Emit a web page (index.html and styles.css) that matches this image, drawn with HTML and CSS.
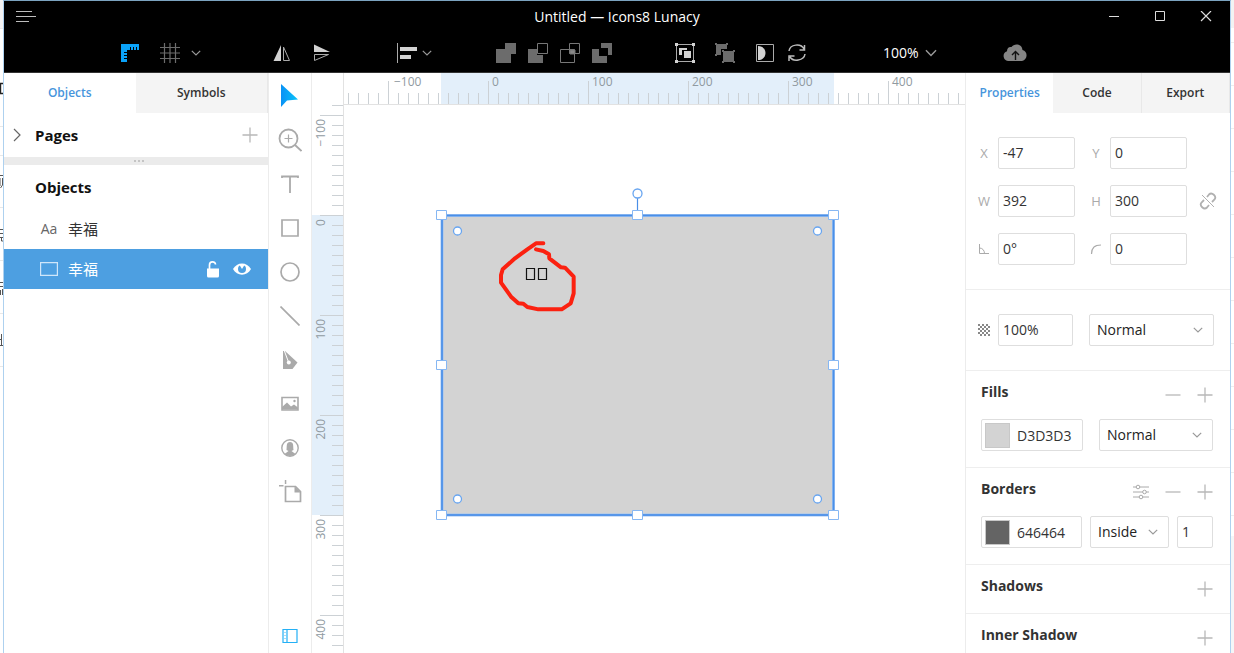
FILE: index.html
```html
<!DOCTYPE html>
<html lang="en">
<head>
<meta charset="utf-8">
<title>Untitled — Icons8 Lunacy</title>
<link rel="stylesheet" href="styles.css">
</head>
<body>
<svg class="defs" aria-hidden="true">
  <symbol id="chevron" viewBox="0 0 10 6"><path d="M.8.8 5 5 9.200.8" fill="none" stroke="currentColor" stroke-width="1.200"/></symbol>
  <symbol id="plus" viewBox="0 0 16 16"><path d="M8 .5v15M.5 8h15" fill="none" stroke="currentColor" stroke-width="1.300"/></symbol>
  <symbol id="minus" viewBox="0 0 16 16"><path d="M.5 8h15" fill="none" stroke="currentColor" stroke-width="1.300"/></symbol>
</svg>
<div class="desktop">
  <div class="behind-left" aria-hidden="true">
    <svg width="3" height="653" fill="none" stroke="#555">
      <path d="M0 28.500h3M0 126.500h3M0 155.500h3M0 207.500h3M0 260.500h3M0 313.500h3M0 366.500h3" stroke="#e8e8e8"/>
      <path d="M3 83.500H.5v10H3" stroke="#222" stroke-width="1.400"/>
      <path d="M0 175.500h3M2.500 178v7l-2 3M0 178v8M0 229.500h3M0 233.500h3M0 237.500h3M1.500 237v4h2M0 282.500h3M0 286.500h3M.5 290v5M2.500 289v6M0 339.500h2M1.500 334v11M0 345.500h3"/>
    </svg>
  </div>
  <div class="app">
    <header class="header">
      <div class="titlebar">
        <button class="icon-btn menu" aria-label="Menu"><svg width="20" height="14" stroke="#bdbdbd" stroke-width="1.200"><path d="M0 1.500h16M0 6.500h20M0 11.500h13"/></svg></button>
        <h1 class="title">Untitled — Icons8 Lunacy</h1>
        <div class="window-buttons">
          <button class="icon-btn" aria-label="Minimize"><svg width="12" height="12" stroke="#ddd"><path d="M1 5.500h10"/></svg></button>
          <button class="icon-btn" aria-label="Maximize"><svg width="12" height="12" stroke="#ddd" fill="none"><path d="M1.500.5h9v9h-9z"/></svg></button>
          <button class="icon-btn" aria-label="Close"><svg width="12" height="12" stroke="#ddd" stroke-width="1.200"><path d="M1 0l10 10M11 0 1 10"/></svg></button>
        </div>
      </div>
      <div class="toolbar">
        <div class="group view">
          <button class="icon-btn" aria-label="Rulers"><svg width="20" height="20" viewBox="0 0 20 20"><path d="M1 1h18v6h-2V4h-1v3h-2V4h-1v3h-2V4h-1v3H7v2H4v1h3v2H4v1h3v2H4v1h3v3H1z" fill="#0aa2f8"/></svg></button>
          <button class="icon-btn" aria-label="Grid"><svg width="20" height="20" stroke="#6c6c6c" stroke-width="1.200"><path d="M4.500 0v20M10 0v20M15.500 0v20M0 4.500h20M0 10h20M0 15.500h20"/></svg></button>
          <button class="icon-btn small" aria-label="Grid options"><svg class="chev"><use href="#chevron"/></svg></button>
        </div>
        <div class="group flips">
          <button class="icon-btn" aria-label="Flip horizontal"><svg width="18" height="18"><path d="M8 1v16H.5z" fill="#d2d2d2"/><path d="M10.500 3v13.500h6z" fill="none" stroke="#aaa"/></svg></button>
          <button class="icon-btn" aria-label="Flip vertical"><svg width="18" height="18"><path d="M1 .5v7.500h16z" fill="#d2d2d2"/><path d="M1.500 10.500v6l14-6z" fill="none" stroke="#aaa"/></svg></button>
        </div>
        <div class="group align">
          <button class="icon-btn" aria-label="Align"><svg width="22" height="20"><path d="M1.500 0v20" stroke="#aaa"/><path d="M4 4h17v4H4zM4 12h11v4H4z" fill="#d2d2d2"/></svg></button>
          <button class="icon-btn small" aria-label="Align options"><svg class="chev"><use href="#chevron"/></svg></button>
        </div>
        <div class="group boolean">
          <button class="icon-btn" aria-label="Union"><svg width="20" height="20" fill="#6c6c6c"><path d="M9 0h11v11h-5v9H0V6h9z"/></svg></button>
          <button class="icon-btn" aria-label="Subtract"><svg width="20" height="20"><path d="M0 6h9v6h6v8H0z" fill="#6c6c6c"/><path d="M9.500.5h10v10h-10z" fill="none" stroke="#777"/></svg></button>
          <button class="icon-btn" aria-label="Intersect"><svg width="20" height="20" fill="none" stroke="#777"><path d="M.5 6.500h14v13H.5zM9.500.5h10v10h-10z"/><path d="M10 7h5v4h-5z" fill="#888"/></svg></button>
          <button class="icon-btn" aria-label="Difference"><svg width="20" height="20" fill="#6c6c6c"><path d="M9 0h11v12h-4V5H9zM0 6h7v7h8v7H0z"/></svg></button>
        </div>
        <div class="group grouping">
          <button class="icon-btn" aria-label="Group"><svg width="20" height="20"><path d="M1.500 1.500h17v17h-17z" fill="none" stroke="#aaa"/><path d="M0 0h3v3H0zM17 0h3v3h-3zM0 17h3v3H0zM17 17h3v3h-3zM4 5h8v2H7v5H4zM9 8h7v7H9z" fill="#d2d2d2"/></svg></button>
          <button class="icon-btn" aria-label="Ungroup"><svg width="20" height="20" fill="#6c6c6c"><path d="M1 1h11v5H6v6H1zM0 0h2v2H0zM11 0h2v2h-2zM0 11h2v2H0zM8 8h11v11H8zM7 7h2v2H7zM18 7h2v2h-2zM7 18h2v2H7zM18 18h2v2h-2z"/></svg></button>
        </div>
        <div class="group misc">
          <button class="icon-btn" aria-label="Mask"><svg width="20" height="20"><path d="M1.500 1.500h17v17h-17z" fill="none" stroke="#aaa"/><path d="M3 3c10 0 10 14 0 14z" fill="#d2d2d2"/></svg></button>
          <button class="icon-btn" aria-label="Refresh"><svg width="20" height="20" fill="none" stroke="#bbb" stroke-width="1.500"><path d="M2 8c1-7 12-8 15-2M18 11c-1 7-12 8-15 3M17.500 2v5h-5M2 18v-5h5.500"/></svg></button>
        </div>
        <button class="zoom">100%<svg class="chev wide"><use href="#chevron"/></svg></button>
        <button class="icon-btn cloud" aria-label="Upload"><svg width="24" height="18" viewBox="0 0 24 18"><path d="M5 17a5 5 0 0 1-1-9.700C4 4 6 2.500 8.500 3 11-1 19-.5 19.500 6 25 7 25 16 19 17z" fill="#858585"/><path d="M12.500 16V7.500M9 11l3.500-3.500L16 11" fill="none" stroke="#111" stroke-width="1.400"/></svg></button>
      </div>
    </header>

    <main class="workspace">
      <aside class="layers">
        <nav class="tabs"><button class="tab active">Objects</button><button class="tab">Symbols</button></nav>
        <div class="pages">
          <button class="icon-btn" aria-label="Expand pages"><svg width="8" height="14" fill="none" stroke="#666" stroke-width="1.200"><path d="M1 1l6 6-6 6"/></svg></button>
          <h2>Pages</h2>
          <button class="icon-btn add" aria-label="Add page"><svg class="sign"><use href="#plus"/></svg></button>
        </div>
        <div class="splitter"><svg width="10" height="2" fill="#c4c4c4"><path d="M0 0h2v2H0zM4 0h2v2H4zM8 0h2v2H8z"/></svg></div>
        <h2 class="objects-title">Objects</h2>
        <ul class="objects">
          <li class="object"><span class="kind">Aa</span><span class="name">幸福</span></li>
          <li class="object selected">
            <span class="kind"><svg width="18" height="14" fill="none" stroke="#cfe6fa" stroke-width="1.200"><path d="M.6.6h16.800v12.800H.6z"/></svg></span>
            <span class="name">幸福</span>
            <button class="icon-btn" aria-label="Lock"><svg width="12" height="17"><path d="M2.500 8V4c0-4 6-4 6-.5" fill="none" stroke="#fff" stroke-width="1.700"/><path d="M0 7.500h12V15q0 1.500-1.500 1.500h-9Q0 16.500 0 15z" fill="#fff"/></svg></button>
            <button class="icon-btn" aria-label="Visibility"><svg width="18" height="14"><path d="M0 7C4-.5 14-.5 18 7c-4 7.500-14 7.500-18 0z" fill="#fff"/><circle cx="9" cy="7" r="4" fill="#4d9fe1"/><path d="M9 7 6.500 3h5z" fill="#fff"/></svg></button>
          </li>
        </ul>
      </aside>

      <nav class="tools">
        <button class="icon-btn" aria-label="Select"><svg width="24" height="24"><defs><linearGradient id="sky" x1="0" x2="1"><stop stop-color="#0a91f5"/><stop offset="1" stop-color="#08c4fa"/></linearGradient></defs><path d="M3 0v23l6-6.500 11-1z" fill="url(#sky)"/></svg></button>
        <button class="icon-btn" aria-label="Zoom"><svg width="24" height="24" fill="none" stroke="#aaa" stroke-width="1.800"><circle cx="10.500" cy="10.500" r="9"/><path d="m17 17 6.500 6"/><path d="M10.500 6.500v8M6.500 10.500h8" stroke-width="1.200"/></svg></button>
        <button class="icon-btn" aria-label="Text"><svg width="18" height="18" fill="none" stroke="#aaa" stroke-width="1.800"><path d="M1 3V1.500h16V3M9 1.500V18"/></svg></button>
        <button class="icon-btn" aria-label="Rectangle"><svg width="18" height="18" fill="none" stroke="#aaa" stroke-width="1.700"><path d="M1 1h16v16H1z"/></svg></button>
        <button class="icon-btn" aria-label="Oval"><svg width="20" height="20" fill="none" stroke="#aaa" stroke-width="1.700"><circle cx="10" cy="10" r="9"/></svg></button>
        <button class="icon-btn" aria-label="Line"><svg width="20" height="20" stroke="#aaa" stroke-width="1.700"><path d="m.5.5 19 19"/></svg></button>
        <button class="icon-btn" aria-label="Pen"><svg width="16" height="20"><path d="M1 1v18h9.500l5-6.500L3 1z" fill="#aaa"/><path d="M2 0 6.500 12" stroke="#fff"/><circle cx="6.800" cy="12.500" r="2" fill="#fff"/></svg></button>
        <button class="icon-btn" aria-label="Image"><svg width="18" height="16"><path d="M1 1.500h16v12.500H1z" fill="none" stroke="#aaa" stroke-width="1.600"/><path d="M1 13.500V11l5-4.500 4 4 3-2 4 3v2z" fill="#aaa"/><circle cx="13.500" cy="5" r="1.200" fill="#aaa"/></svg></button>
        <button class="icon-btn" aria-label="Avatar"><svg width="18" height="18"><circle cx="9" cy="9" r="8.200" fill="none" stroke="#aaa" stroke-width="1.400"/><path d="M9 3C5 3 6 7 5.500 11l2 1L3.500 15q5.500 4 11 0l-4-3 2-1C12 7 13 3 9 3z" fill="#aaa"/></svg></button>
        <button class="icon-btn" aria-label="Artboard"><svg width="24" height="24"><path d="M7.500 6.500h10l5 5v10h-15z" fill="none" stroke="#aaa" stroke-width="1.700"/><path d="M16.500 6v6.500H23zM1 5h4.500v1.500H1zM6.800 0h1.500v4H6.800z" fill="#aaa"/></svg></button>
        <button class="icon-btn last" aria-label="Toggle panels"><svg width="16" height="16" fill="none" stroke="#24b0f5" stroke-width="1.200"><path d="M1 1.500h14v13H1zM5 1.500v13"/><path d="M2 4.500h2M2 7.500h2M2 10.500h2" stroke="#a5dcf8"/></svg></button>
      </nav>

      <section class="canvas" aria-label="Canvas">
        <svg class="artwork" width="100%" height="100%">
          <defs>
            <pattern id="ticks-x" x="6" y="0" width="10" height="31" patternUnits="userSpaceOnUse"><path d="M.5 20v11" stroke="#ccd1d5"/></pattern>
            <pattern id="majors-x" x="76" y="0" width="100" height="31" patternUnits="userSpaceOnUse"><path d="M.5 8v23" stroke="#ccd1d5"/></pattern>
            <pattern id="ticks-y" x="0" y="2" width="32" height="10" patternUnits="userSpaceOnUse"><path d="M20 .5h12" stroke="#ccd1d5"/></pattern>
            <pattern id="majors-y" x="0" y="42" width="32" height="100" patternUnits="userSpaceOnUse"><path d="M8 .5h24" stroke="#ccd1d5"/></pattern>
          </defs>
          <path d="M129 0h393v31H129zM0 142h32v300H0z" fill="#e3effa"/>
          <svg x="33" width="100%" height="32"><g transform="translate(-33)"><rect width="200%" height="31" fill="url(#ticks-x)"/><rect width="200%" height="31" fill="url(#majors-x)"/></g></svg>
          <rect y="31" width="32" height="100%" fill="url(#ticks-y)"/>
          <rect y="31" width="32" height="100%" fill="url(#majors-y)"/>
          <path d="M32 31.500h2000M31.500 0v2000" stroke="#e2e2e2" fill="none"/>
          <g class="ruler-text">
            <text x="82" y="13">−100</text><text x="180" y="13">0</text><text x="280" y="13">100</text><text x="380" y="13">200</text><text x="480" y="13">300</text><text x="580" y="13">400</text>
          </g>
          <g class="ruler-text vertical" transform="rotate(-90)">
            <text x="-46" y="13">−100</text><text x="-146" y="13">0</text><text x="-246" y="13">100</text><text x="-346" y="13">200</text><text x="-446" y="13">300</text><text x="-546" y="13">400</text>
          </g>
          <rect x="130" y="142.500" width="391.500" height="299.500" fill="#d3d3d3" stroke="#9fc4f3" stroke-width="3"/>
          <rect x="130" y="142.500" width="391.500" height="299.500" fill="none" stroke="#4a8fe7" stroke-width="1.700"/>
          <path d="M325.500 125v14" stroke="#4a8fe7" stroke-width="1.200"/>
          <g fill="#fff" stroke="#86b7f3">
            <path d="M124.500 137.500h10v9h-10zM320.500 137.500h10v9h-10zM516.500 137.500h10v9h-10zM124.500 287.500h10v9h-10zM516.500 287.500h10v9h-10zM124.500 437.500h10v9h-10zM320.500 437.500h10v9h-10zM516.500 437.500h10v9h-10z"/>
            <g stroke="#68a5f0" stroke-width="1.300"><circle cx="325.500" cy="120.500" r="4.500"/><circle cx="145.500" cy="158" r="4"/><circle cx="505.500" cy="158" r="4"/><circle cx="145.500" cy="426" r="4"/><circle cx="505.500" cy="426" r="4"/></g>
          </g>
          <path d="M214.500 195.500h8v11h-8zM226.500 195.500h8v11h-8z" fill="none" stroke="#111" stroke-width="1.200"/>
          <path transform="translate(118 107) scale(.33333)" d="M340 190h-22l-26 18-37 27-37 33-5 17v23l30 42 22 20 15 1 12 10 33 7h70l27-18 9-30v-50l-26-27-12-1-35-27-1-12-17-10-22-5" fill="none" stroke="#fb2110" stroke-width="12" stroke-linecap="round" stroke-linejoin="round"/>
        </svg>
      </section>

      <aside class="inspector">
        <nav class="tabs"><button class="tab active">Properties</button><button class="tab">Code</button><button class="tab">Export</button></nav>
        <section class="block geometry">
          <div class="field"><label for="x">X</label><input id="x" value="-47"></div>
          <div class="field"><label for="y">Y</label><input id="y" value="0"></div>
          <span></span>
          <div class="field"><label for="w">W</label><input id="w" value="392"></div>
          <div class="field"><label for="h">H</label><input id="h" value="300"></div>
          <button class="icon-btn" aria-label="Lock proportions"><svg width="18" height="18" fill="none" stroke="#b0b0b0" stroke-width="1.800"><path d="M8 5l2-2.500c3-3 8 2 5.500 5L13 10M10 13l-2 2.500c-3 3-8-2-5.500-5L5 8"/><path d="m3 3 12 12" stroke-width="1"/></svg></button>
          <div class="field"><label for="angle" aria-label="Rotation"><svg width="12" height="12" fill="none" stroke="#aaa"><path d="M1.500 1v9.500H11M1.500 5c3 0 5 2.500 5 5.500"/></svg></label><input id="angle" value="0°"></div>
          <div class="field"><label for="radius" aria-label="Radius"><svg width="12" height="12" fill="none" stroke="#aaa" stroke-width="1.200"><path d="M1.500 11C1.500 5 4.500 2 11 2"/></svg></label><input id="radius" value="0"></div>
        </section>
        <section class="block blending">
          <div class="field opacity"><label for="opacity" aria-label="Opacity"><svg width="12" height="12"><defs><pattern id="check" width="4" height="4" patternUnits="userSpaceOnUse"><path d="M0 0h2v2H0zM2 2h2v2H2z" fill="#888"/></pattern></defs><rect width="12" height="12" fill="url(#check)"/></svg></label><input id="opacity" value="100%"></div>
          <div class="select"><select aria-label="Blend mode"><option>Normal</option></select><svg class="chev"><use href="#chevron"/></svg></div>
        </section>
        <section class="block paint">
          <header><h3>Fills</h3><button class="icon-btn" aria-label="Remove fill"><svg class="sign"><use href="#minus"/></svg></button><button class="icon-btn" aria-label="Add fill"><svg class="sign"><use href="#plus"/></svg></button></header>
          <div class="row fill-row">
            <div class="color"><span class="swatch light"></span><input aria-label="Fill color" value="D3D3D3"></div>
            <div class="select"><select aria-label="Fill blend mode"><option>Normal</option></select><svg class="chev"><use href="#chevron"/></svg></div>
          </div>
        </section>
        <section class="block paint">
          <header><h3>Borders</h3><button class="icon-btn" aria-label="Border options"><svg width="16" height="16" fill="#fff" stroke="#aaa"><path d="M0 3h16M0 8h16M0 13h16"/><circle cx="5" cy="3" r="1.800"/><circle cx="11.500" cy="8" r="1.800"/><circle cx="8" cy="13" r="1.800"/></svg></button><button class="icon-btn" aria-label="Remove border"><svg class="sign"><use href="#minus"/></svg></button><button class="icon-btn" aria-label="Add border"><svg class="sign"><use href="#plus"/></svg></button></header>
          <div class="row border-row">
            <div class="color"><span class="swatch dark"></span><input aria-label="Border color" value="646464"></div>
            <div class="select"><select aria-label="Border position"><option>Inside</option></select><svg class="chev"><use href="#chevron"/></svg></div>
            <input aria-label="Border width" value="1">
          </div>
        </section>
        <section class="block paint empty"><header><h3>Shadows</h3><button class="icon-btn" aria-label="Add shadow"><svg class="sign"><use href="#plus"/></svg></button></header></section>
        <section class="block paint empty"><header><h3>Inner Shadow</h3><button class="icon-btn" aria-label="Add inner shadow"><svg class="sign"><use href="#plus"/></svg></button></header></section>
      </aside>
    </main>
  </div>
  <div class="behind-right" aria-hidden="true"></div>
</div>
</body>
</html>
```
FILE: styles.css
```css
* { box-sizing: border-box; }
body { margin: 0; font: 14px/20px "Open Sans", "Noto Sans CJK SC", sans-serif; color: #333; background: #fff; }
h1, h2, h3, ul { margin: 0; padding: 0; font-weight: 400; list-style: none; }
button, input, select { font: inherit; color: inherit; border: 0; background: none; padding: 0; margin: 0; min-width: 0; border-radius: 0; }
svg { display: block; flex: none; }
.defs { position: absolute; width: 0; height: 0; }
.desktop { display: grid; grid-template-columns: 3px 1fr 3px; height: 100vh; overflow: hidden; }
.behind-left { overflow: hidden; background: linear-gradient(#f3f3f3 28px, #fff 28px); }
.behind-right { background: linear-gradient(#f3f3f3 28px, transparent 28px, transparent 536px, #f5f6f7 536px), repeating-linear-gradient(#fff 0 42px, #eee 42px 43px); }
.app { display: flex; flex-direction: column; min-width: 0; min-height: 0; border: 1px solid #aed1ef; border-top-color: #7ba3bf; border-bottom: 0; }
.icon-btn { display: flex; align-items: center; justify-content: center; flex: none; }
.chev { width: 10px; height: 6px; color: #999; }
.chev.wide { width: 12px; height: 8px; }
.sign { width: 16px; height: 16px; color: #b8b8b8; }

.header { background: #000; color: #fff; border-bottom: 1px solid #333; }
.titlebar { display: grid; grid-template-columns: 1fr auto 1fr; align-items: center; height: 32px; padding: 0 12px; }
.menu { justify-self: start; }
.title { font-size: 14px; }
.window-buttons { display: flex; justify-content: flex-end; gap: 34px; padding-right: 6px; }
.toolbar { display: flex; align-items: center; height: 39px; padding-left: 116px; }
.group { display: flex; align-items: center; }
.view { gap: 20px; }
.view .small { margin-left: -9px; }
.flips { gap: 22px; margin-left: 72px; }
.align { gap: 4px; margin-left: 65px; }
.boolean { gap: 12px; margin-left: 64px; }
.grouping { gap: 20px; margin-left: 63px; }
.misc { gap: 12px; margin-left: 20px; }
.zoom { display: flex; align-items: center; gap: 6px; margin-left: 76px; }
.cloud { margin-left: 66px; }

.workspace { display: grid; grid-template-columns: 264px 44px 1fr 265px; flex: 1; min-height: 0; }
.tabs { display: flex; height: 40px; font-size: 12px; font-weight: 600; }
.tab { flex: 1; background: #f4f4f4; border-right: 1px solid #e8e8e8; }
.tab.active { background: #fff; color: #4795dc; border-right: 0; }
.pages { display: flex; align-items: center; height: 44px; padding: 0 10px 0 9px; gap: 14px; }
.pages h2, .objects-title { font-size: 15px; font-weight: 700; color: #111; }
.add { margin-left: auto; }
.splitter { display: flex; align-items: center; justify-content: center; height: 8px; padding-left: 5px; background: #ebebeb; }
.objects-title { padding: 12px 31px; }
.object { display: flex; align-items: center; height: 40px; padding: 0 17px 0 36px; gap: 14px; font-size: 15px; }
.object .kind { display: flex; width: 18px; justify-content: center; color: #666; font-size: 14px; }
.object .name { flex: 1; margin-left: -4px; }
.selected, .selected .kind { color: #fff; }
.selected { background: #4d9fe1; }

.tools { display: flex; flex-direction: column; padding-top: 1px; border: solid #ececec; border-width: 0 1px; }
.tools .icon-btn { height: 44px; }
.tools .last { height: 34px; margin-top: auto; }
.canvas { min-width: 0; overflow: hidden; }
.artwork { display: block; }
.ruler-text { font-size: 12px; fill: #909aa1; }
.vertical { text-anchor: end; }

.inspector { border-left: 1px solid #ececec; min-width: 0; overflow: hidden; }
.block { border-bottom: 1px solid #eee; }
.inspector input, .inspector select { width: 100%; height: 32px; padding: 0 4px 1px; border: 1px solid #dedede; border-radius: 2px; }
.geometry { display: grid; grid-template-columns: 1fr 1fr 20px; gap: 16px 11px; padding: 24px 12px 24px 8px; }
.field { display: flex; align-items: center; gap: 4px; }
.field label { display: flex; justify-content: center; flex: none; width: 20px; font-size: 13px; color: #aaa; }
.blending { display: grid; grid-template-columns: 99px 1fr; gap: 16px; padding: 24px 16px 24px 8px; }
.select { display: grid; align-items: center; }
.select > * { grid-area: 1 / 1; }
.inspector .select select { appearance: none; padding: 0 7px; color: #222; }
.select .chev { justify-self: end; margin-right: 11px; pointer-events: none; }
.paint { padding: 0 17px 16px 15px; }
.paint header { display: flex; align-items: center; gap: 16px; height: 48px; }
.paint h3 { flex: 1; font-size: 14px; font-weight: 700; padding-bottom: 6px; }
.empty { padding-bottom: 0; }
.row { display: grid; }
.fill-row { grid-template-columns: 102px 1fr; gap: 16px; }
.border-row { grid-template-columns: 101px 1fr 36px; gap: 8px; }
.color { display: flex; align-items: center; height: 32px; padding-left: 3px; border: 1px solid #dedede; border-radius: 2px; }
.inspector .color input { height: 30px; border: 0; padding: 0 0 0 7px; }
.swatch { flex: none; width: 25px; height: 25px; border: 1px solid #c8c8c8; }
.light { background: #d3d3d3; }
.dark { background: #646464; }
```
